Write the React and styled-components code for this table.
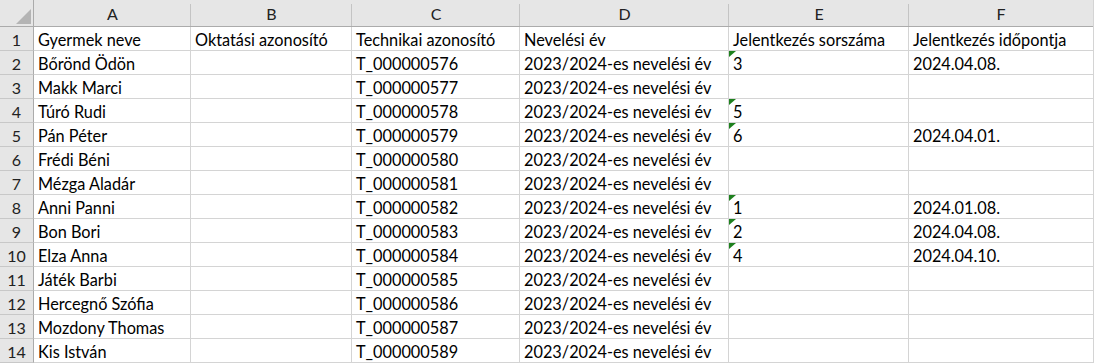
import React from "react";
import styled, { createGlobalStyle } from "styled-components";

const Global = createGlobalStyle`
  html, body { margin: 0; padding: 0; background: #ffffff; }
  body { font-family: Lato, "Open Sans", "Liberation Sans", sans-serif; }
`;

const COLS = "34px 157px 161px 168px 209px 180px 184px";

const Sheet = styled.div`
  display: grid;
  grid-template-columns: ${COLS};
  grid-auto-rows: 24px;
  grid-template-rows: 27px;
  width: 1093px;
  border-right: 1px solid #d4d4d4;
  font-size: 16.3px;
  color: #000;
`;

const Corner = styled.div`
  position: relative;
  background: #e6e6e6;
  border-right: 1px solid #ababab;
  border-bottom: 1px solid #ababab;
  box-sizing: border-box;
`;

const CornerTri = styled.div`
  position: absolute;
  right: 2px;
  bottom: 2px;
  width: 0;
  height: 0;
  border-left: 15px solid transparent;
  border-bottom: 15px solid #b4b4b4;
`;

const ColHead = styled.div`
  background: #e6e6e6;
  border-bottom: 1px solid #ababab;
  box-sizing: border-box;
  display: flex;
  align-items: flex-end;
  justify-content: center;
  padding-bottom: 3px;
  position: relative;
  color: #222;
  font-size: 16px;
  &::after {
    content: "";
    position: absolute;
    right: 0;
    top: 4px;
    bottom: 0;
    width: 1px;
    background: ${(p) => (p.$last ? "transparent" : "#c4c4c4")};
  }
`;

const RowHead = styled.div`
  background: #e6e6e6;
  border-right: 1px solid #ababab;
  border-bottom: 1px solid #c8c8c8;
  box-sizing: border-box;
  display: flex;
  align-items: flex-end;
  justify-content: center;
  padding-bottom: 1px;
  color: #222;
  font-size: 16px;
`;

const Cell = styled.div`
  position: relative;
  border-right: ${(p) => (p.$last ? "none" : "1px solid #d4d4d4")};
  border-bottom: 1px solid #d4d4d4;
  box-sizing: border-box;
  display: flex;
  align-items: flex-end;
  padding: 0 4px 1px 4px;
  white-space: nowrap;
  overflow: visible;
`;

const Flag = styled.div`
  position: absolute;
  left: 0;
  top: 0;
  width: 0;
  height: 0;
  border-top: 6px solid #1e801e;
  border-right: 7px solid transparent;
`;

const header = ["A", "B", "C", "D", "E", "F"];

const rows = [
  ["Gyermek neve", "Oktatási azonosító", "Technikai azonosító", "Nevelési év", "Jelentkezés sorszáma", "Jelentkezés időpontja"],
  ["Bőrönd Ödön", "", "T_000000576", "2023/2024-es nevelési év", "3", "2024.04.08."],
  ["Makk Marci", "", "T_000000577", "2023/2024-es nevelési év", "", ""],
  ["Túró Rudi", "", "T_000000578", "2023/2024-es nevelési év", "5", ""],
  ["Pán Péter", "", "T_000000579", "2023/2024-es nevelési év", "6", "2024.04.01."],
  ["Frédi Béni", "", "T_000000580", "2023/2024-es nevelési év", "", ""],
  ["Mézga Aladár", "", "T_000000581", "2023/2024-es nevelési év", "", ""],
  ["Anni Panni", "", "T_000000582", "2023/2024-es nevelési év", "1", "2024.01.08."],
  ["Bon Bori", "", "T_000000583", "2023/2024-es nevelési év", "2", "2024.04.08."],
  ["Elza Anna", "", "T_000000584", "2023/2024-es nevelési év", "4", "2024.04.10."],
  ["Játék Barbi", "", "T_000000585", "2023/2024-es nevelési év", "", ""],
  ["Hercegnő Szófia", "", "T_000000586", "2023/2024-es nevelési év", "", ""],
  ["Mozdony Thomas", "", "T_000000587", "2023/2024-es nevelési év", "", ""],
  ["Kis István", "", "T_000000589", "2023/2024-es nevelési év", "", ""],
];

export default function App() {
  return (
    <>
      <Global />
      <Sheet>
        <Corner>
          <CornerTri />
        </Corner>
        {header.map((h, i) => (
          <ColHead key={h} $last={i === header.length - 1}>
            {h}
          </ColHead>
        ))}
        {rows.map((r, ri) => (
          <React.Fragment key={ri}>
            <RowHead>{ri + 1}</RowHead>
            {r.map((c, ci) => (
              <Cell key={ci} $last={ci === r.length - 1}>
                {ci === 4 && ri > 0 && c !== "" && <Flag />}
                {c}
              </Cell>
            ))}
          </React.Fragment>
        ))}
      </Sheet>
    </>
  );
}
